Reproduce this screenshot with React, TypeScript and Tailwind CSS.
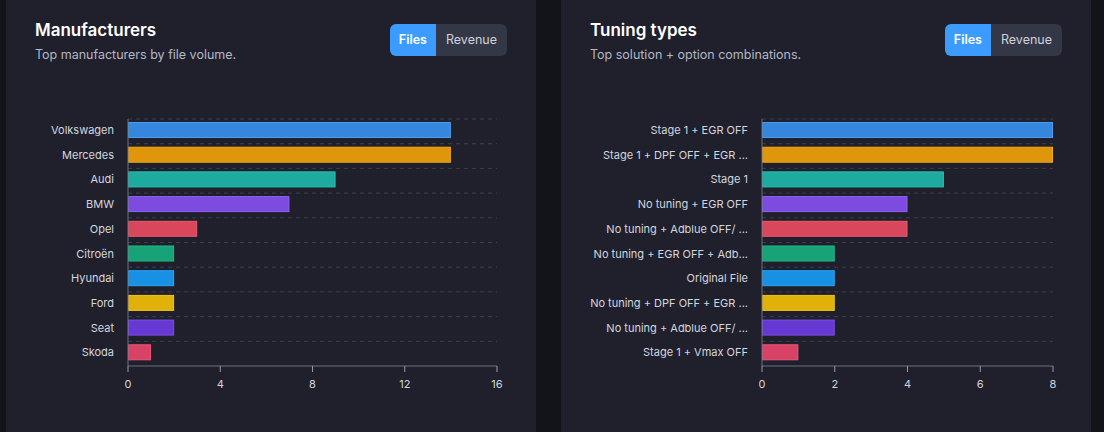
type Row = { label: string; value: number; fill: string; stroke: string };

const palette = [
  ["#3586dd", "#4a9cf0"],
  ["#e0960a", "#f2a91c"],
  ["#1dab9f", "#2bc2b5"],
  ["#7e4be0", "#9163ee"],
  ["#d8475b", "#ec5b6f"],
  ["#17a277", "#22b889"],
  ["#1890e4", "#2ba3f5"],
  ["#e0b108", "#f2c51b"],
  ["#6639d4", "#7a4fe6"],
  ["#d84266", "#ec577a"],
];

const makeRows = (labels: string[], values: number[]): Row[] =>
  labels.map((label, i) => ({ label, value: values[i], fill: palette[i][0], stroke: palette[i][1] }));

const manufacturers = makeRows(
  ["Volkswagen", "Mercedes", "Audi", "BMW", "Opel", "Citroën", "Hyundai", "Ford", "Seat", "Skoda"],
  [14, 14, 9, 7, 3, 2, 2, 2, 2, 1]
);

const tuning = makeRows(
  [
    "Stage 1 + EGR OFF",
    "Stage 1 + DPF OFF + EGR ...",
    "Stage 1",
    "No tuning + EGR OFF",
    "No tuning + Adblue OFF/ ...",
    "No tuning + EGR OFF + Adb...",
    "Original File",
    "No tuning + DPF OFF + EGR ...",
    "No tuning + Adblue OFF/ ...",
    "Stage 1 + Vmax OFF",
  ],
  [8, 8, 5, 4, 4, 2, 2, 2, 2, 1]
);

function BarChart({ rows, x0, x1, max, ticks }: { rows: Row[]; x0: number; x1: number; max: number; ticks: number[] }) {
  const step = 24.7;
  const scale = (v: number) => x0 + ((x1 - x0) * v) / max;
  return (
    <svg width="530" height="300" className="block">
      {rows.map((r, i) => (
        <line key={"g" + i} x1={x0} x2={x1} y1={19 + i * step} y2={19 + i * step} stroke="#3c3f50" strokeDasharray="4 4" />
      ))}
      {rows.map((r, i) => (
        <g key={r.label + i}>
          <text x={x0 - 14} y={30 + i * step} dy="4" textAnchor="end" fontSize="11" fill="#d4d6df" fontFamily="Inter, sans-serif">
            {r.label}
          </text>
          <rect x={x0 + 0.5} y={22.5 + i * step} width={scale(r.value) - x0 - 1} height={15} fill={r.fill} stroke={r.stroke} />
        </g>
      ))}
      <line x1={x0} x2={x0} y1={19} y2={266} stroke="#6b6e80" />
      <line x1={x0} x2={x1} y1={266} y2={266} stroke="#6b6e80" />
      {ticks.map((t) => (
        <g key={t}>
          <line x1={scale(t)} x2={scale(t)} y1={266} y2={272} stroke="#9a9cab" />
          <text x={scale(t)} y={288} textAnchor="middle" fontSize="11" fill="#d4d6df" fontFamily="Inter, sans-serif">
            {t}
          </text>
        </g>
      ))}
    </svg>
  );
}

function Card({ title, subtitle, children }: { title: string; subtitle: string; children: React.ReactNode }) {
  return (
    <div className="w-[530px] h-[432px] bg-[#1f202c] relative">
      <div className="flex justify-between items-start pl-[29px] pr-[29px] pt-[18px]">
        <div>
          <div className="text-[17px] font-semibold text-white leading-6">{title}</div>
          <div className="text-[12.5px] text-[#b4b7c6] mt-[4px]">{subtitle}</div>
        </div>
        <div className="flex h-8 rounded-md overflow-hidden mt-[6px] text-[12.5px]">
          <div className="bg-[#3b9bff] text-white font-semibold px-[9px] flex items-center">Files</div>
          <div className="bg-[#343746] text-[#cfd1dc] px-[10px] flex items-center">Revenue</div>
        </div>
      </div>
      <div className="absolute left-0 top-[100px]">{children}</div>
    </div>
  );
}

export default function App() {
  return (
    <div className="w-[1104px] h-[432px] bg-[#13131a] flex gap-[25px] pl-[6px] overflow-hidden" style={{ fontFamily: "Inter, 'Noto Sans', sans-serif" }}>
      <Card title="Manufacturers" subtitle="Top manufacturers by file volume.">
        <BarChart rows={manufacturers} x0={122} x1={491} max={16} ticks={[0, 4, 8, 12, 16]} />
      </Card>
      <Card title="Tuning types" subtitle="Top solution + option combinations.">
        <BarChart rows={tuning} x0={201} x1={492} max={8} ticks={[0, 2, 4, 6, 8]} />
      </Card>
    </div>
  );
}
